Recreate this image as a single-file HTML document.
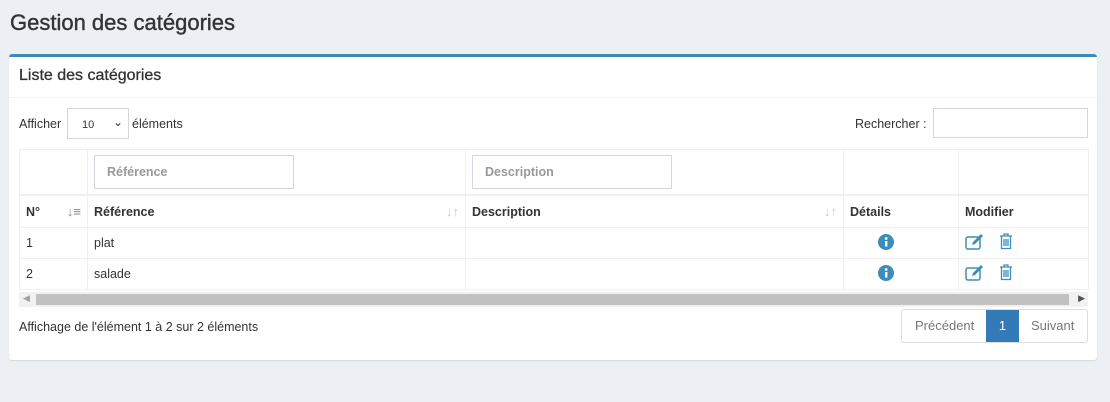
<!DOCTYPE html><html><head><style>
body{margin:0;background:#ecf0f5;font-family:"Liberation Sans",sans-serif;width:1110px;height:402px;overflow:hidden;color:#333;font-size:12.5px}
h1{position:absolute;left:10px;top:10px;margin:0;font-size:22px;font-weight:normal;color:#333;-webkit-text-stroke:0.4px #333}
.box{position:absolute;left:9px;top:54px;width:1088px;height:303px;background:#fff;border-top:3px solid #3c8dbc;border-radius:3px;box-shadow:0 1px 1px rgba(0,0,0,.1)}
.bh{height:40px;border-bottom:1px solid #f4f4f4;font-size:16px;line-height:38px;padding-left:10px;-webkit-text-stroke:0.3px #333}
.a{position:absolute}
.inp{position:absolute;border:1px solid #d2d6de;background:#fff;box-sizing:border-box}
table{position:absolute;left:10px;top:92px;border-collapse:collapse;width:1069px;table-layout:fixed}
td{border:1px solid #f0f0f0;padding:0 6px;height:30px}
.f td{height:44px;border-bottom:2px solid #f0f0f0}
.h td{font-weight:bold;height:31px;position:relative}
.s{position:absolute;right:6px;top:8px;color:#ccc;font-size:13px}
</style></head><body>
<h1>Gestion des catégories</h1>
<div class="box">
<div class="bh">Liste des catégories</div>
<div class="a" style="left:10px;top:60px">Afficher</div>
<div class="inp" style="left:58px;top:51px;width:62px;height:31px;font-size:11px;padding:10px 0 0 14px">10<span style="position:absolute;right:5px;top:6px;font-size:12px">⌄</span></div>
<div class="a" style="left:123px;top:60px">éléments</div>
<div class="a" style="left:846px;top:60px">Rechercher :</div>
<div class="inp" style="left:924px;top:51px;width:155px;height:30px"></div>
<table>
<colgroup><col style="width:68px"><col style="width:378px"><col style="width:378px"><col style="width:115px"><col style="width:130px"></colgroup>
<tr class="f"><td></td><td><div class="inp" style="position:static;width:200px;height:34px;color:#999;font-weight:bold;padding:9px 12px">Référence</div></td><td><div class="inp" style="position:static;width:200px;height:34px;color:#999;font-weight:bold;padding:9px 12px">Description</div></td><td></td><td></td></tr>
<tr class="h"><td>N°<span class="s" style="color:#888">↓≡</span></td><td>Référence<span class="s">↓↑</span></td><td>Description<span class="s">↓↑</span></td><td>Détails</td><td>Modifier</td></tr>
<tr><td style="padding-left:6px">1</td><td>plat</td><td></td><td style="padding-left:34px"><svg width="16" height="16" viewBox="0 0 16 16"><circle cx="8" cy="8" r="8" fill="#3c8dbc"/><rect x="7" y="7" width="2.4" height="5.5" fill="#fff"/><circle cx="8.2" cy="4.5" r="1.4" fill="#fff"/></svg></td><td><svg width="22" height="16" viewBox="0 0 22 16"><rect x="1" y="3" width="14" height="12" rx="2" fill="none" stroke="#3c8dbc" stroke-width="1.5"/><path d="M7 11l1-3 8-8 2 2-8 8z" fill="#3c8dbc"/></svg><svg style="margin-left:12px" width="14" height="17" viewBox="0 0 14 17"><path d="M1 3h12M5 3V1h4v2M2.5 3v12.5h9V3M5 6v7M7 6v7M9 6v7" fill="none" stroke="#3c8dbc" stroke-width="1.3"/></svg></td></tr>
<tr><td>2</td><td>salade</td><td></td><td style="padding-left:34px"><svg width="16" height="16" viewBox="0 0 16 16"><circle cx="8" cy="8" r="8" fill="#3c8dbc"/><rect x="7" y="7" width="2.4" height="5.5" fill="#fff"/><circle cx="8.2" cy="4.5" r="1.4" fill="#fff"/></svg></td><td><svg width="22" height="16" viewBox="0 0 22 16"><rect x="1" y="3" width="14" height="12" rx="2" fill="none" stroke="#3c8dbc" stroke-width="1.5"/><path d="M7 11l1-3 8-8 2 2-8 8z" fill="#3c8dbc"/></svg><svg style="margin-left:12px" width="14" height="17" viewBox="0 0 14 17"><path d="M1 3h12M5 3V1h4v2M2.5 3v12.5h9V3M5 6v7M7 6v7M9 6v7" fill="none" stroke="#3c8dbc" stroke-width="1.3"/></svg></td></tr>
</table>
<div class="a" style="left:10px;top:235px;width:1069px;height:15px;background:#f1f1f1"><div style="position:absolute;left:17px;top:2px;width:1033px;height:11px;background:#c1c1c1"></div><span style="position:absolute;left:4px;top:1px;font-size:9px;color:#a0a0a0">◀</span><span style="position:absolute;right:3px;top:1px;font-size:9px;color:#505050">▶</span></div>
<div class="a" style="left:10px;top:263px">Affichage de l'élément 1 à 2 sur 2 éléments</div>
<div class="a" style="left:892px;top:252px;width:185px;height:32px;border:1px solid #ddd;border-radius:3px;color:#777;font-size:13px;line-height:32px">
<span style="position:absolute;left:13px">Précédent</span>
<span style="position:absolute;left:84px;top:0;width:33px;height:32px;background:#337ab7;color:#fff;text-align:center">1</span>
<span style="position:absolute;left:129px">Suivant</span></div>
</div>
</body></html>
